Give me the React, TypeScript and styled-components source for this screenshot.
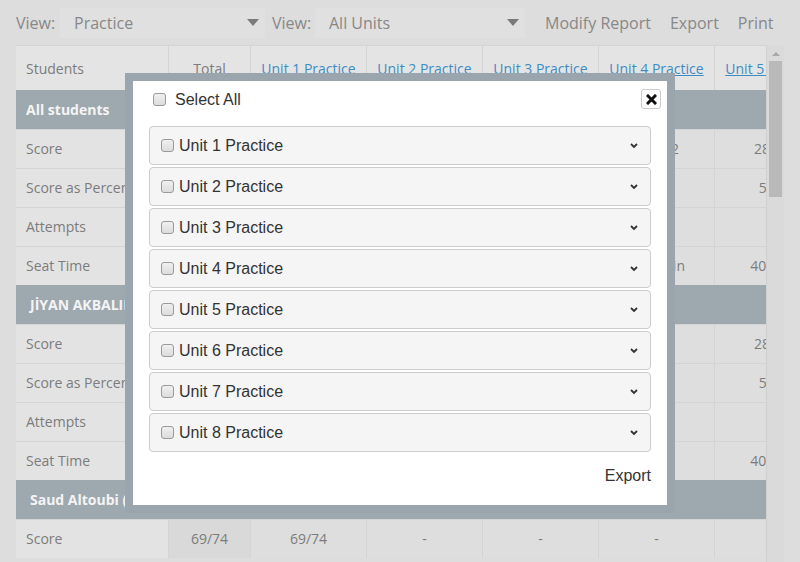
import React from "react";
import styled, { createGlobalStyle } from "styled-components";

const Global = createGlobalStyle`
  html, body { margin: 0; padding: 0; }
  body { width: 800px; height: 562px; overflow: hidden; background: #dddddd; font-family: "Open Sans", "Liberation Sans", sans-serif; }
`;

const Page = styled.div`
  position: relative;
  width: 800px;
  height: 562px;
  overflow: hidden;
  background: #dddddd;
  padding: 0 16px;
  box-sizing: border-box;
`;

const Toolbar = styled.div`
  height: 45px;
  display: flex;
  align-items: center;
  font-size: 16px;
  color: #888888;
  white-space: nowrap;
`;

const ViewLabel = styled.span<{ $w: number }>`
  width: ${(p) => p.$w}px;
  flex: none;
`;

const Select = styled.div<{ $w: number }>`
  width: ${(p) => p.$w}px;
  flex: none;
  height: 30px;
  box-sizing: border-box;
  background: #e0e0e0;
  display: flex;
  align-items: center;
  padding: 0 6px 0 14px;
  margin-right: 7px;
  color: #888888;
`;

const SelectText = styled.span`
  flex: 1;
`;

const Caret = styled.span`
  width: 0;
  height: 0;
  border-left: 6px solid transparent;
  border-right: 6px solid transparent;
  border-top: 7px solid #7a7a7a;
`;

const Actions = styled.div`
  display: flex;
  gap: 19px;
  margin-left: 13px;
`;

const TableArea = styled.div`
  display: flex;
  width: 768px;
`;

const TableClip = styled.div`
  width: 751px;
  overflow: hidden;
  font-size: 14px;
  color: #7c7c7c;
`;

const Row = styled.div<{ $h: number }>`
  display: flex;
  width: 930px;
  height: ${(p) => p.$h}px;
  box-sizing: border-box;
  border-top: 1px solid #d4d4d4;
`;

const HeadCell = styled.div<{ $w: number; $left?: boolean }>`
  width: ${(p) => p.$w}px;
  flex: none;
  box-sizing: border-box;
  background: #e4e4e4;
  display: flex;
  align-items: center;
  justify-content: ${(p) => (p.$left ? "flex-start" : "center")};
  padding: 0 ${(p) => (p.$left ? "10px" : "0")};
  border-left: 1px solid #d4d4d4;
  white-space: nowrap;
  overflow: hidden;
  &:first-child { border-left: none; }
`;

const HeadLink = styled.a`
  color: #3d8dc4;
  text-decoration: underline;
`;

const GroupRow = styled.div<{ $indent: number }>`
  height: 39px;
  width: 930px;
  box-sizing: border-box;
  background: #9ea8af;
  color: #f4f4f4;
  font-weight: 700;
  padding-left: ${(p) => p.$indent}px;
  display: flex;
  align-items: center;
  white-space: nowrap;
`;

const Cell = styled.div<{ $w: number; $kind: "label" | "total" | "unit" }>`
  width: ${(p) => p.$w}px;
  flex: none;
  box-sizing: border-box;
  border-left: 1px solid #d4d4d4;
  background: ${(p) => (p.$kind === "label" ? "#e3e3e3" : p.$kind === "total" ? "#d9d9d9" : "#dedede")};
  display: flex;
  align-items: center;
  justify-content: ${(p) => (p.$kind === "label" ? "flex-start" : "center")};
  padding: 0 ${(p) => (p.$kind === "label" ? "10px" : "0")} 2px;
  white-space: nowrap;
  overflow: hidden;
  &:first-child { border-left: none; }
`;

const Scrollbar = styled.div`
  width: 17px;
  height: 520px;
  background: #dadada;
  border-left: 1px solid #d0d0d0;
  display: flex;
  flex-direction: column;
  align-items: center;
`;

const ScrollArrow = styled.div`
  margin-top: 7px;
  width: 0;
  height: 0;
  border-left: 4px solid transparent;
  border-right: 4px solid transparent;
  border-bottom: 4px solid #a8a8a8;
`;

const Thumb = styled.div`
  margin-top: 5px;
  width: 13px;
  height: 136px;
  background: #b9b9b9;
`;

const Modal = styled.div`
  position: absolute;
  left: 125px;
  top: 73px;
  width: 550px;
  height: 440px;
  box-sizing: border-box;
  border: 8px solid #9aa5ad;
  background: #ffffff;
  font-family: "Liberation Sans", Arial, sans-serif;
  color: #333333;
  display: flex;
  flex-direction: column;
  padding: 0 16px;
`;

const ModalHead = styled.div`
  height: 45px;
  display: flex;
  align-items: center;
  padding: 0 0 0 4px;
  font-size: 16px;
`;

const HeadLabel = styled.span`
  flex: 1;
  margin-left: 9px;
  margin-top: -8px;
`;

const CheckBox = styled.span`
  display: inline-block;
  width: 11px;
  height: 11px;
  border: 1px solid #9a9a9a;
  border-radius: 3px;
  background: linear-gradient(#f0f0f0, #dcdcdc);
  flex: none;
`;

const HeadBox = styled(CheckBox)`
  margin-top: -8px;
`;

const CloseButton = styled.button`
  width: 20px;
  height: 20px;
  padding: 0;
  margin: -9px -10px 0 0;
  border: 1px solid #cccccc;
  border-radius: 3px;
  background: #ffffff;
  display: flex;
  align-items: center;
  justify-content: center;
`;

const List = styled.div`
  display: flex;
  flex-direction: column;
  gap: 2px;
`;

const Item = styled.div`
  height: 39px;
  box-sizing: border-box;
  border: 1px solid #cccccc;
  border-radius: 4px;
  background: #f5f5f5;
  display: flex;
  align-items: center;
  padding: 0 12px 0 11px;
  font-size: 16px;
`;

const ItemLabel = styled.span`
  flex: 1;
  margin-left: 5px;
`;

const Footer = styled.div`
  display: flex;
  justify-content: flex-end;
  margin-top: 15px;
  font-size: 16px;
`;

const Chevron = () => (
  <svg width="8" height="6" viewBox="0 0 8 6">
    <polyline points="1,1 4,4 7,1" fill="none" stroke="#333" strokeWidth="1.8" />
  </svg>
);

const CloseIcon = () => (
  <svg width="11" height="11" viewBox="0 0 11 11">
    <path d="M2 2 L9 9 M9 2 L2 9" stroke="#111" strokeWidth="3" strokeLinecap="square" />
  </svg>
);

const units = ["Unit 1 Practice", "Unit 2 Practice", "Unit 3 Practice", "Unit 4 Practice", "Unit 5 Practice", "Unit 6 Practice"];
const LABEL_W = 152;
const TOTAL_W = 82;
const UNIT_W = 116;

type DataRow = { label: string; total: string; vals: string[] };
type Group = { name: string; indent: number; rows: DataRow[] };

const groupData: Group[] = [
  {
    name: "All students",
    indent: 10,
    rows: [
      { label: "Score", total: "69/74", vals: ["69/74", "-", "-", "62/172", "28/74", ""] },
      { label: "Score as Percentage", total: "93%", vals: ["93%", "-", "-", "", "53%", ""] },
      { label: "Attempts", total: "", vals: ["", "", "", "", "", ""] },
      { label: "Seat Time", total: "", vals: ["", "", "", "1h 5 min", "40 min", ""] },
    ],
  },
  {
    name: "JİYAN AKBALIK",
    indent: 14,
    rows: [
      { label: "Score", total: "69/74", vals: ["69/74", "-", "-", "", "28/74", ""] },
      { label: "Score as Percentage", total: "93%", vals: ["93%", "-", "-", "", "53%", ""] },
      { label: "Attempts", total: "", vals: ["", "", "", "", "", ""] },
      { label: "Seat Time", total: "", vals: ["", "", "", "", "40 min", ""] },
    ],
  },
  {
    name: "Saud Altoubi (saud)",
    indent: 14,
    rows: [
      { label: "Score", total: "69/74", vals: ["69/74", "-", "-", "-", "", ""] },
    ],
  },
];

export default function App() {
  return (
    <>
      <Global />
      <Page>
        <Toolbar>
          <ViewLabel $w={44}>View:</ViewLabel>
          <Select $w={205}>
            <SelectText>Practice</SelectText>
            <Caret />
          </Select>
          <ViewLabel $w={43}>View:</ViewLabel>
          <Select $w={210}>
            <SelectText>All Units</SelectText>
            <Caret />
          </Select>
          <Actions>
            <span>Modify Report</span>
            <span>Export</span>
            <span>Print</span>
          </Actions>
        </Toolbar>
        <TableArea>
          <TableClip>
            <Row $h={45}>
              <HeadCell $w={LABEL_W} $left>
                Students
              </HeadCell>
              <HeadCell $w={TOTAL_W}>Total</HeadCell>
              {units.map((u) => (
                <HeadCell $w={UNIT_W} key={u}>
                  <HeadLink>{u}</HeadLink>
                </HeadCell>
              ))}
            </Row>
            {groupData.map((g) => (
              <React.Fragment key={g.name}>
                <GroupRow $indent={g.indent}>{g.name}</GroupRow>
                {g.rows.map((r, idx) => (
                  <Row $h={39} key={g.name + r.label + idx}>
                    <Cell $w={LABEL_W} $kind="label">
                      {r.label}
                    </Cell>
                    <Cell $w={TOTAL_W} $kind="total">
                      {r.total}
                    </Cell>
                    {r.vals.map((v, i) => (
                      <Cell $w={UNIT_W} $kind="unit" key={i}>
                        {v}
                      </Cell>
                    ))}
                  </Row>
                ))}
              </React.Fragment>
            ))}
          </TableClip>
          <Scrollbar>
            <ScrollArrow />
            <Thumb />
          </Scrollbar>
        </TableArea>
        <Modal>
          <ModalHead>
            <HeadBox />
            <HeadLabel>Select All</HeadLabel>
            <CloseButton aria-label="close">
              <CloseIcon />
            </CloseButton>
          </ModalHead>
          <List>
            {[1, 2, 3, 4, 5, 6, 7, 8].map((n) => (
              <Item key={n}>
                <CheckBox />
                <ItemLabel>Unit {n} Practice</ItemLabel>
                <Chevron />
              </Item>
            ))}
          </List>
          <Footer>Export</Footer>
        </Modal>
      </Page>
    </>
  );
}
